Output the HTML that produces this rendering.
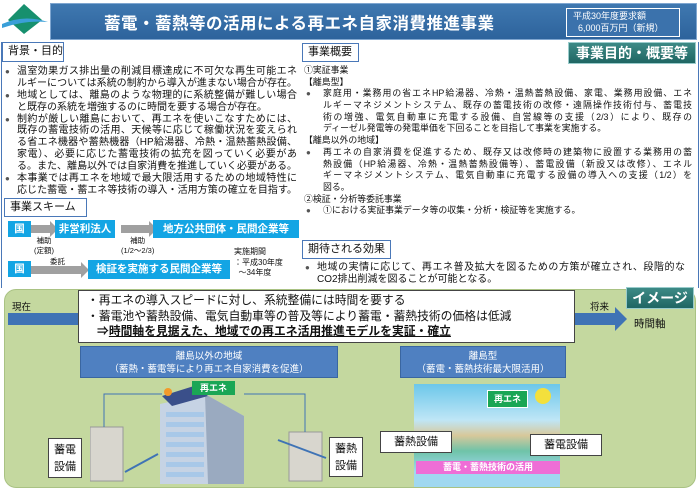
<!DOCTYPE html>
<html><head><meta charset="utf-8"><style>
*{margin:0;padding:0;box-sizing:border-box}
body{width:700px;height:490px;overflow:hidden;background:#fff;font-family:"Liberation Sans","Noto Sans CJK JP",sans-serif;color:#111;position:relative}
.a{position:absolute}
.j{display:block;white-space:nowrap;text-align:justify;text-align-last:justify}
.n{display:block;white-space:nowrap}
.tl{font-size:10px;line-height:11.9px}
.tl .j,.tl .n{height:11.9px}
.tr{font-size:8.9px;line-height:11.7px}
.tr .j,.tr .n{height:11.7px}
.lbl{position:absolute;border:1.5px solid #4a78b8;background:#fff;font-size:11px;line-height:15px;padding:0 5px;white-space:nowrap}
.bb{position:absolute;background:#13a5e4;color:#fff;font-weight:bold;font-size:10.5px;text-align:center;white-space:nowrap}
.arr{position:absolute;height:8px;background:#a0a0a0}
.arr:after{content:"";position:absolute;right:-8px;top:-4px;border-left:8px solid #a0a0a0;border-top:8px solid transparent;border-bottom:8px solid transparent}
.wl{position:absolute;background:#fff;border:1px solid #444;font-size:11px;text-align:center;line-height:15px}
.bl{position:relative;padding-left:19px}
.bl>i{position:absolute;left:2px;top:0;font-style:normal;font-size:8px;color:#555}
.bll{position:relative;padding-left:12px}
.bll>i{position:absolute;left:0;top:0;font-style:normal;font-size:8px;color:#555}
</style></head><body>
<!-- header -->
<svg class="a" style="left:0;top:2px" width="52" height="36"><polygon points="24,2 42,18 24,32 8,18" fill="#17906e"/><path d="M2 22 Q24 12 48 20 Q24 18 2 26Z" fill="#3a9fd8"/></svg>
<div class="a" style="left:50px;top:3px;width:647px;height:37px;background:linear-gradient(#3f78b0,#2d639c);border:1px solid #7fa6d0"></div>
<div class="a" style="left:104px;top:10px;color:#fff;font-size:16.5px;font-weight:bold;letter-spacing:0.5px">蓄電・蓄熱等の活用による再エネ自家消費推進事業</div>
<div class="a" style="left:566px;top:8px;width:114px;height:29px;border:1.5px solid #fff;background:#3b72ac;color:#fff;font-size:9px;line-height:12px;padding:1px 0 0 6px;white-space:nowrap">平成30年度要求額<br>&nbsp;&nbsp;6,000百万円（新規）</div>
<!-- frame -->
<div class="a" style="left:1px;top:42px;width:698px;height:246px;border-left:1.5px solid #4a78b8;border-right:1.5px solid #4a78b8"></div>
<div class="lbl" style="left:2px;top:42px;width:62px;height:20px;line-height:17px">背景・目的</div>
<div class="a tl" style="left:5px;top:66px;width:292px">
<div class="bll"><i>●</i><span class="j">温室効果ガス排出量の削減目標達成に不可欠な再生可能エネ</span><span class="j">ルギーについては系統の制約から導入が進まない場合が存在。</span></div>
<div class="bll"><i>●</i><span class="j">地域としては、離島のような物理的に系統整備が難しい場合</span><span class="n">と既存の系統を増強するのに時間を要する場合が存在。</span></div>
<div class="bll"><i>●</i><span class="j">制約が厳しい離島において、再エネを使いこなすためには、</span><span class="j">既存の蓄電技術の活用、天候等に応じて稼働状況を変えられ</span><span class="j">る省エネ機器や蓄熱機器（HP給湯器、冷熱・温熱蓄熱設備、</span><span class="j">家電）、必要に応じた蓄電技術の拡充を図っていく必要があ</span><span class="j">る。また、離島以外では自家消費を推進していく必要がある。</span></div>
<div class="bll"><i>●</i><span class="j">本事業では再エネを地域で最大限活用するための地域特性に</span><span class="j">応じた蓄電・蓄エネ等技術の導入・活用方策の確立を目指す。</span></div>
</div>
<div class="lbl" style="left:302px;top:43px;width:57px;height:19px;line-height:16px">事業概要</div>
<div class="a" style="left:568px;top:42px;width:128px;height:22px;background:linear-gradient(#3d8a86,#1f6663);border:1px solid #9cc;color:#fff;font-weight:bold;font-size:14px;text-align:center;line-height:20px">事業目的・概要等</div>
<div class="a tr" style="left:304px;top:65px;width:388px">
<span class="n">①実証事業</span><span class="n">【離島型】</span>
<div class="bl"><i>●</i><span class="j">家庭用・業務用の省エネHP給湯器、冷熱・温熱蓄熱設備、家電、業務用設備、エネ</span><span class="j">ルギーマネジメントシステム、既存の蓄電技術の改修・遠隔操作技術付与、蓄電技</span><span class="j">術の増強、電気自動車に充電する設備、自営線等の支援（2/3）により、既存の</span><span class="n">ディーゼル発電等の発電単価を下回ることを目指して事業を実施する。</span></div>
<span class="n">【離島以外の地域】</span>
<div class="bl"><i>●</i><span class="j">再エネの自家消費を促進するため、既存又は改修時の建築物に設置する業務用の蓄</span><span class="j">熱設備（HP給湯器、冷熱・温熱蓄熱設備等）、蓄電設備（新設又は改修）、エネル</span><span class="j">ギーマネジメントシステム、電気自動車に充電する設備の導入への支援（1/2）を</span><span class="n">図る。</span></div>
<span class="n">②検証・分析等委託事業</span>
<div class="bl"><i>●</i><span class="n">①における実証事業データ等の収集・分析・検証等を実施する。</span></div>
</div>
<!-- scheme -->
<div class="lbl" style="left:4px;top:198px;width:83px;height:19px;line-height:16px">事業スキーム</div>
<div class="bb" style="left:8px;top:221px;width:23px;height:16px;line-height:16px">国</div>
<div class="arr" style="left:31px;top:225px;width:19px"></div>
<div class="bb" style="left:55px;top:220px;width:60px;height:18px;line-height:18px">非営利法人</div>
<div class="arr" style="left:121px;top:225px;width:28px"></div>
<div class="bb" style="left:153px;top:220px;width:146px;height:18px;line-height:18px">地方公共団体・民間企業等</div>
<div class="a" style="left:34px;top:236px;font-size:7.5px;line-height:10px;text-align:center">補助<br>(定額)</div>
<div class="a" style="left:121px;top:236px;font-size:7.5px;line-height:10px;text-align:center">補助<br>(1/2～2/3)</div>
<div class="bb" style="left:8px;top:261px;width:23px;height:16px;line-height:16px">国</div>
<div class="a" style="left:50px;top:256px;font-size:7.5px">委託</div>
<div class="arr" style="left:31px;top:266px;width:50px"></div>
<div class="bb" style="left:88px;top:260px;width:142px;height:19px;line-height:19px">検証を実施する民間企業等</div>
<div class="a" style="left:234px;top:247px;font-size:8px;line-height:10.5px">実施期間<br>：平成30年度<br>&nbsp;&nbsp;～34年度</div>
<div class="lbl" style="left:302px;top:240px;width:89px;height:19px;line-height:16px">期待される効果</div>
<div class="a tl" style="left:305px;top:262px;width:380px;line-height:11.5px"><div class="bll"><i>●</i><span class="j" style="height:11.5px">地域の実情に応じて、再エネ普及拡大を図るための方策が確立され、段階的な</span><span class="n" style="height:11.5px">CO2排出削減を図ることが可能となる。</span></div></div>
<!-- bottom -->
<div class="a" style="left:4px;top:289px;width:692px;height:199px;background:#c4d89f;border:1.5px solid #a9c283;border-radius:12px"></div>
<div class="a" style="left:12px;top:299px;font-size:9.5px">現在</div>
<div class="a" style="left:8px;top:313px;width:612px;height:12px;background:#3f73b5"></div>
<div class="a" style="left:615px;top:307px;border-left:12px solid #3f73b5;border-top:12px solid transparent;border-bottom:12px solid transparent"></div>
<div class="a" style="left:590px;top:299px;font-size:9.5px">将来</div>
<div class="a" style="left:634px;top:316px;font-size:10.5px">時間軸</div>
<div class="a" style="left:626px;top:287px;width:68px;height:22px;background:linear-gradient(#3d8a86,#1f6663);border:1px solid #9cc;color:#fff;font-weight:bold;font-size:14px;text-align:center;line-height:20px">イメージ</div>
<div class="a" style="left:78px;top:290px;width:497px;height:53px;background:#fff;border:1px solid #444;font-size:11.8px;line-height:15.5px;padding:2px 0 0 8px;white-space:nowrap">・再エネの導入スピードに対し、系統整備には時間を要する<br>・蓄電池や蓄熱設備、電気自動車等の普及等により蓄電・蓄熱技術の価格は低減<br><b style="padding-left:10px">⇒<u>時間軸を見据えた、地域での再エネ活用推進モデルを実証・確立</u></b></div>
<div class="a" style="left:80px;top:346px;width:258px;height:32px;background:#4f80c1;border:1px solid #3a66a0;color:#fff;font-size:9.5px;line-height:13px;text-align:center;padding-top:3px">離島以外の地域<br>（蓄熱・蓄電等により再エネ自家消費を促進）</div>
<div class="a" style="left:400px;top:346px;width:166px;height:32px;background:#4f80c1;border:1px solid #3a66a0;color:#fff;font-size:9.5px;line-height:13px;text-align:center;padding-top:3px">離島型<br>（蓄電・蓄熱技術最大限活用）</div>
<!-- building -->
<svg class="a" style="left:90px;top:382px" width="290" height="106">
<polygon points="70,22 115,12 154,34 154,102 70,102" fill="#c6d3e4"/>
<polygon points="115,12 154,34 154,102 118,102" fill="#9aaac0"/>
<polygon points="72,14 104,4 118,14 82,24" fill="#3a4f8a"/>
<circle cx="78" cy="10" r="4" fill="#f39a2a"/>
<g fill="#a8c8e8"><rect x="76" y="30" width="38" height="5"/><rect x="76" y="40" width="38" height="5"/><rect x="76" y="50" width="38" height="5"/><rect x="76" y="60" width="38" height="5"/><rect x="76" y="70" width="38" height="5"/><rect x="76" y="80" width="38" height="5"/><rect x="76" y="90" width="38" height="5"/></g>
<rect x="0" y="45" width="33" height="54" fill="#d8d6ce" stroke="#999"/>
<rect x="199" y="50" width="33" height="49" fill="#d8d6ce" stroke="#999"/>
<path d="M14 45V12H72M215 50V12H154" stroke="#3f73b5" fill="none"/>
<path d="M35 90L68 72M236 76L188 58" stroke="#3f73b5" stroke-width="2"/>
</svg>
<div class="a" style="left:192px;top:381px;width:43px;height:14px;background:#1aa655;color:#fff;font-weight:bold;font-size:9px;text-align:center;line-height:14px">再エネ</div>
<div class="wl" style="left:48px;top:438px;width:34px;height:40px;line-height:17px;padding-top:3px">蓄電<br>設備</div>
<div class="wl" style="left:329px;top:437px;width:34px;height:40px;line-height:17px;padding-top:3px">蓄熱<br>設備</div>
<!-- island -->
<div class="a" style="left:414px;top:384px;width:146px;height:103px;background:linear-gradient(#6cc7ea,#bfe6f6 35%,#d8c89a 50%,#6fc3a8 65%,#a0d8f0 85%)"></div>
<div class="a" style="left:535px;top:388px;width:16px;height:16px;border-radius:50%;background:#f3e03c"></div>
<div class="a" style="left:416px;top:461px;width:144px;height:13px;background:#ee6ed6;color:#fff;font-weight:bold;font-size:9px;text-align:center;line-height:13px">蓄電・蓄熱技術の活用</div>
<div class="a" style="left:487px;top:390px;width:41px;height:18px;background:#1aa655;color:#fff;font-weight:bold;font-size:9px;text-align:center;line-height:16px;border:1px solid #fff">再エネ</div>
<div class="wl" style="left:380px;top:431px;width:72px;height:22px;line-height:20px">蓄熱設備</div>
<div class="wl" style="left:530px;top:434px;width:72px;height:22px;line-height:20px">蓄電設備</div>
</body></html>
